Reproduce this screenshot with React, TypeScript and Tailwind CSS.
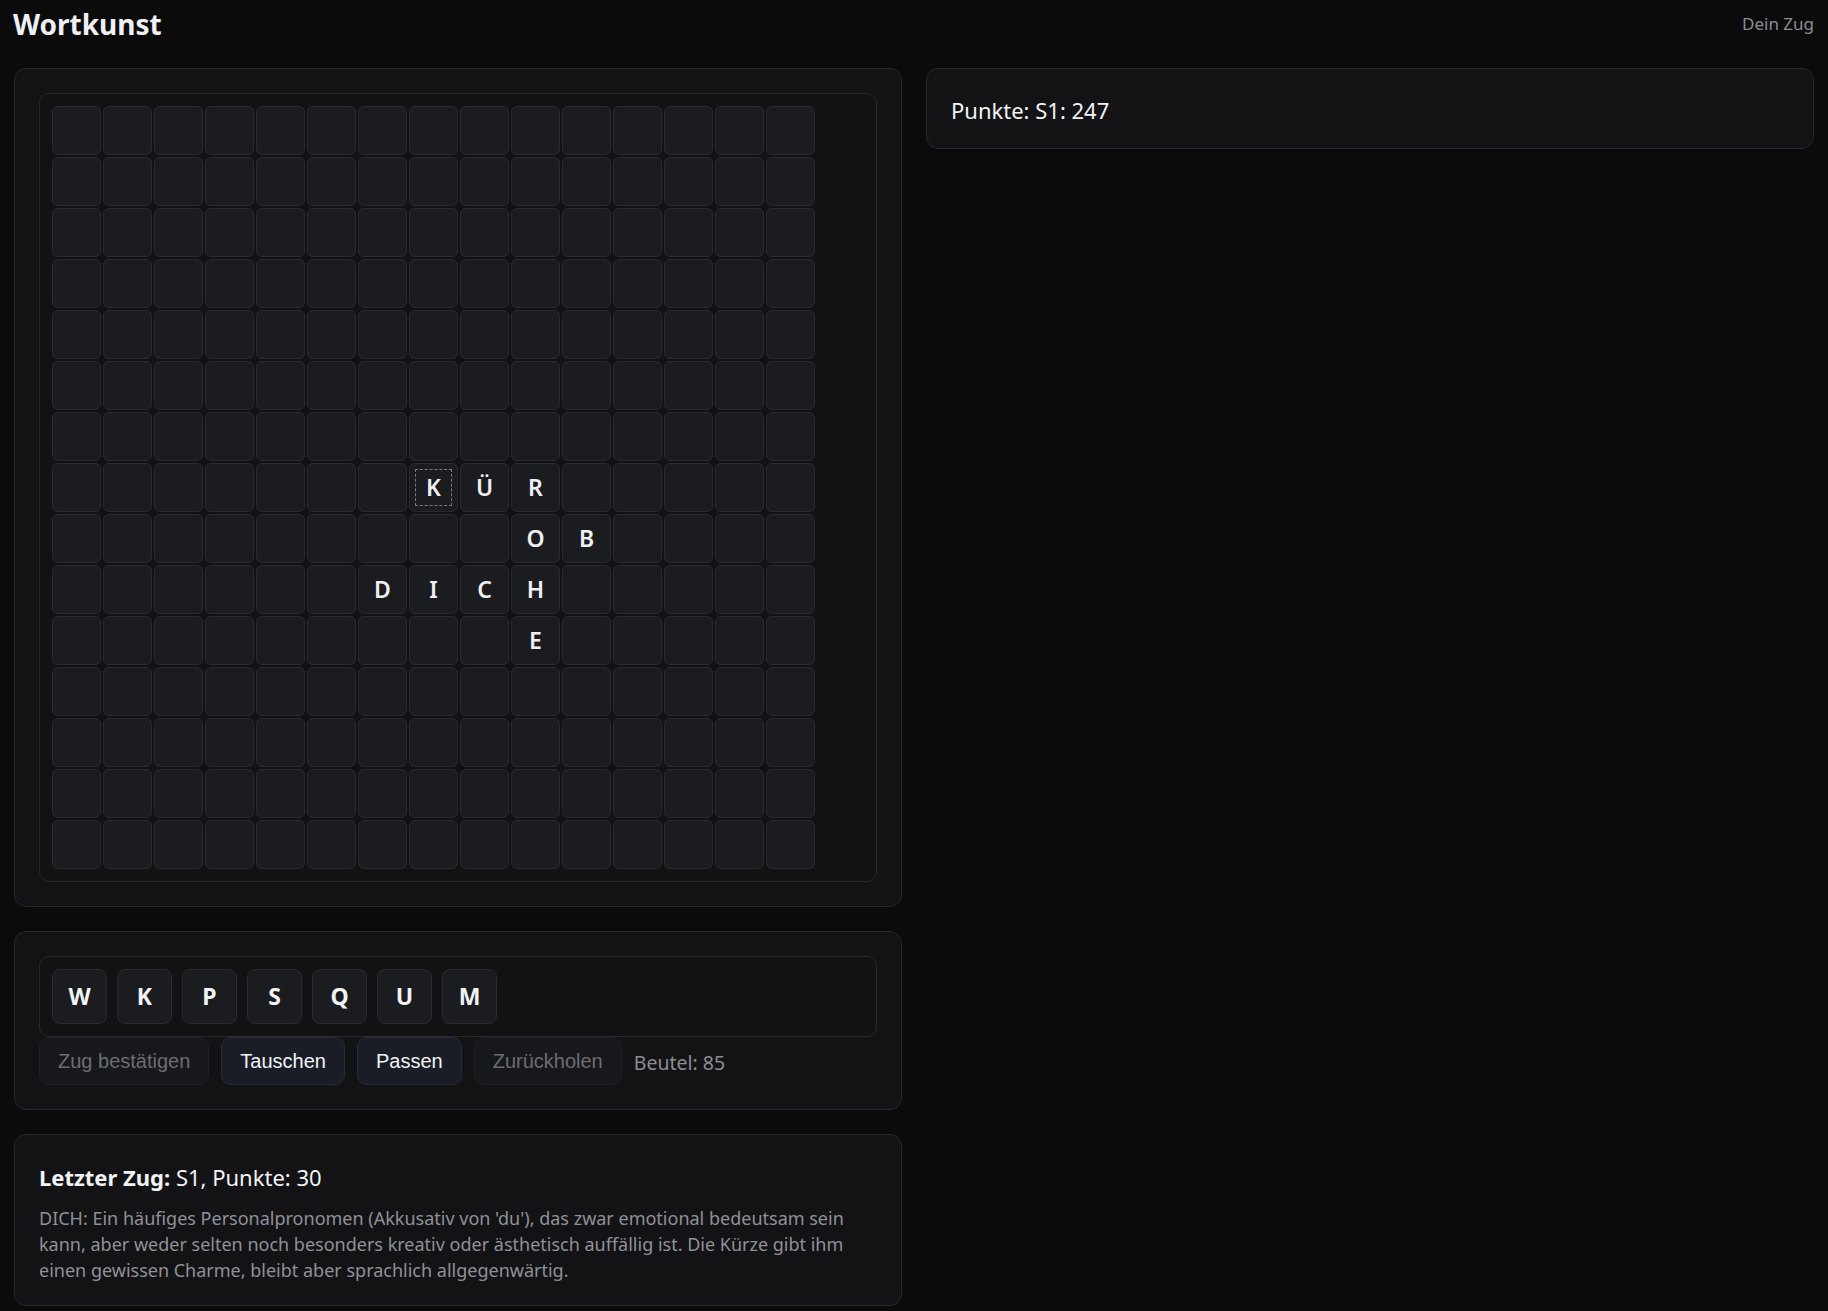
import React from "react";

const placed: Record<string, string> = {
  "7-7": "K",
  "7-8": "Ü",
  "7-9": "R",
  "8-9": "O",
  "8-10": "B",
  "9-6": "D",
  "9-7": "I",
  "9-8": "C",
  "9-9": "H",
  "10-9": "E",
};

const rack = ["W", "K", "P", "S", "Q", "U", "M"];

function Board() {
  const cells = [];
  for (let r = 0; r < 15; r++) {
    for (let c = 0; c < 15; c++) {
      const key = `${r}-${c}`;
      const letter = placed[key];
      cells.push(
        <div
          key={key}
          className="relative h-[49px] w-[49px] rounded-md border border-[#2a2b30] bg-[#1b1c20] flex items-center justify-center text-[23px] font-semibold text-[#eef0f3]"
        >
          {key === "7-7" && (
            <span className="absolute inset-[5px] border border-dashed border-[#7a7b80]" />
          )}
          {letter}
        </div>
      );
    }
  }
  return (
    <div className="rounded-[10px] border border-[#27282d] bg-[#121215] p-3">
      <div className="grid grid-cols-[repeat(15,49px)] gap-[2px]">{cells}</div>
    </div>
  );
}

function Rack() {
  return (
    <div className="rounded-xl border border-[#27282d] bg-[#131316] px-6 pt-6 pb-6">
      <div className="rounded-[10px] border border-[#27282d] bg-[#121215] p-3">
        <div className="flex gap-[10px]">
          {rack.map((l, i) => (
            <div
              key={i}
              className="h-[55px] w-[55px] rounded-lg border border-[#2a2b30] bg-[#1b1c20] flex items-center justify-center text-[23px] font-bold text-[#f2f3f5]"
            >
              {l}
            </div>
          ))}
        </div>
      </div>
      <div className="flex items-center gap-3">
        <button
          disabled
          className="h-[48px] rounded-[10px] border border-[#202126] bg-[#17181c] px-[18px] text-[20px] text-[#6c6d71] font-['Liberation_Sans',Arial,sans-serif]"
        >
          Zug bestätigen
        </button>
        <button className="h-[48px] rounded-[10px] border border-[#2a2d36] bg-[#1a1d26] px-[18px] text-[20px] text-[#f2f3f5] font-['Liberation_Sans',Arial,sans-serif]">
          Tauschen
        </button>
        <button className="h-[48px] rounded-[10px] border border-[#2a2d36] bg-[#1a1d26] px-[18px] text-[20px] text-[#f2f3f5] font-['Liberation_Sans',Arial,sans-serif]">
          Passen
        </button>
        <button
          disabled
          className="h-[48px] rounded-[10px] border border-[#202126] bg-[#17181c] px-[18px] text-[20px] text-[#6c6d71] font-['Liberation_Sans',Arial,sans-serif]"
        >
          Zurückholen
        </button>
        <span className="mt-[3px] text-[19.5px] text-[#8b8d92]">Beutel: 85</span>
      </div>
    </div>
  );
}

export default function App() {
  return (
    <div className="min-h-screen bg-[#0b0b0c] px-[14px] pb-6 font-['Noto_Sans',sans-serif] text-[#eceef1]">
      <header className="flex h-[48px] items-center justify-between">
        <h1 className="-ml-[1px] text-[28px] font-bold leading-[36px] text-[#eef0f3]">Wortkunst</h1>
        <span className="text-[17px] text-[#8b8d92]">Dein Zug</span>
      </header>

      <main className="mt-[20px] grid grid-cols-2 items-start gap-6">
        <div className="flex flex-col gap-6">
          <section className="rounded-xl border border-[#27282d] bg-[#131316] p-6">
            <Board />
          </section>

          <Rack />

          <section className="rounded-xl border border-[#27282d] bg-[#131316] px-6 pt-[26px] pb-[22px]">
            <h2 className="text-[22px] leading-[32px] text-[#f2f3f5]">
              <span className="font-bold">Letzter Zug:</span> S1, Punkte: 30
            </h2>
            <p className="mt-3 text-[18px] leading-[26px] text-[#8f9196]">
              DICH: Ein häufiges Personalpronomen (Akkusativ von 'du'), das zwar emotional bedeutsam sein
              kann, aber weder selten noch besonders kreativ oder ästhetisch auffällig ist. Die Kürze gibt ihm
              einen gewissen Charme, bleibt aber sprachlich allgegenwärtig.
            </p>
          </section>
        </div>

        <section className="rounded-xl border border-[#27282d] bg-[#131316] px-6 pt-[26px] pb-[22px]">
          <div className="text-[22px] leading-[31px] text-[#f2f3f5]">Punkte: S1: 247</div>
        </section>
      </main>
    </div>
  );
}
